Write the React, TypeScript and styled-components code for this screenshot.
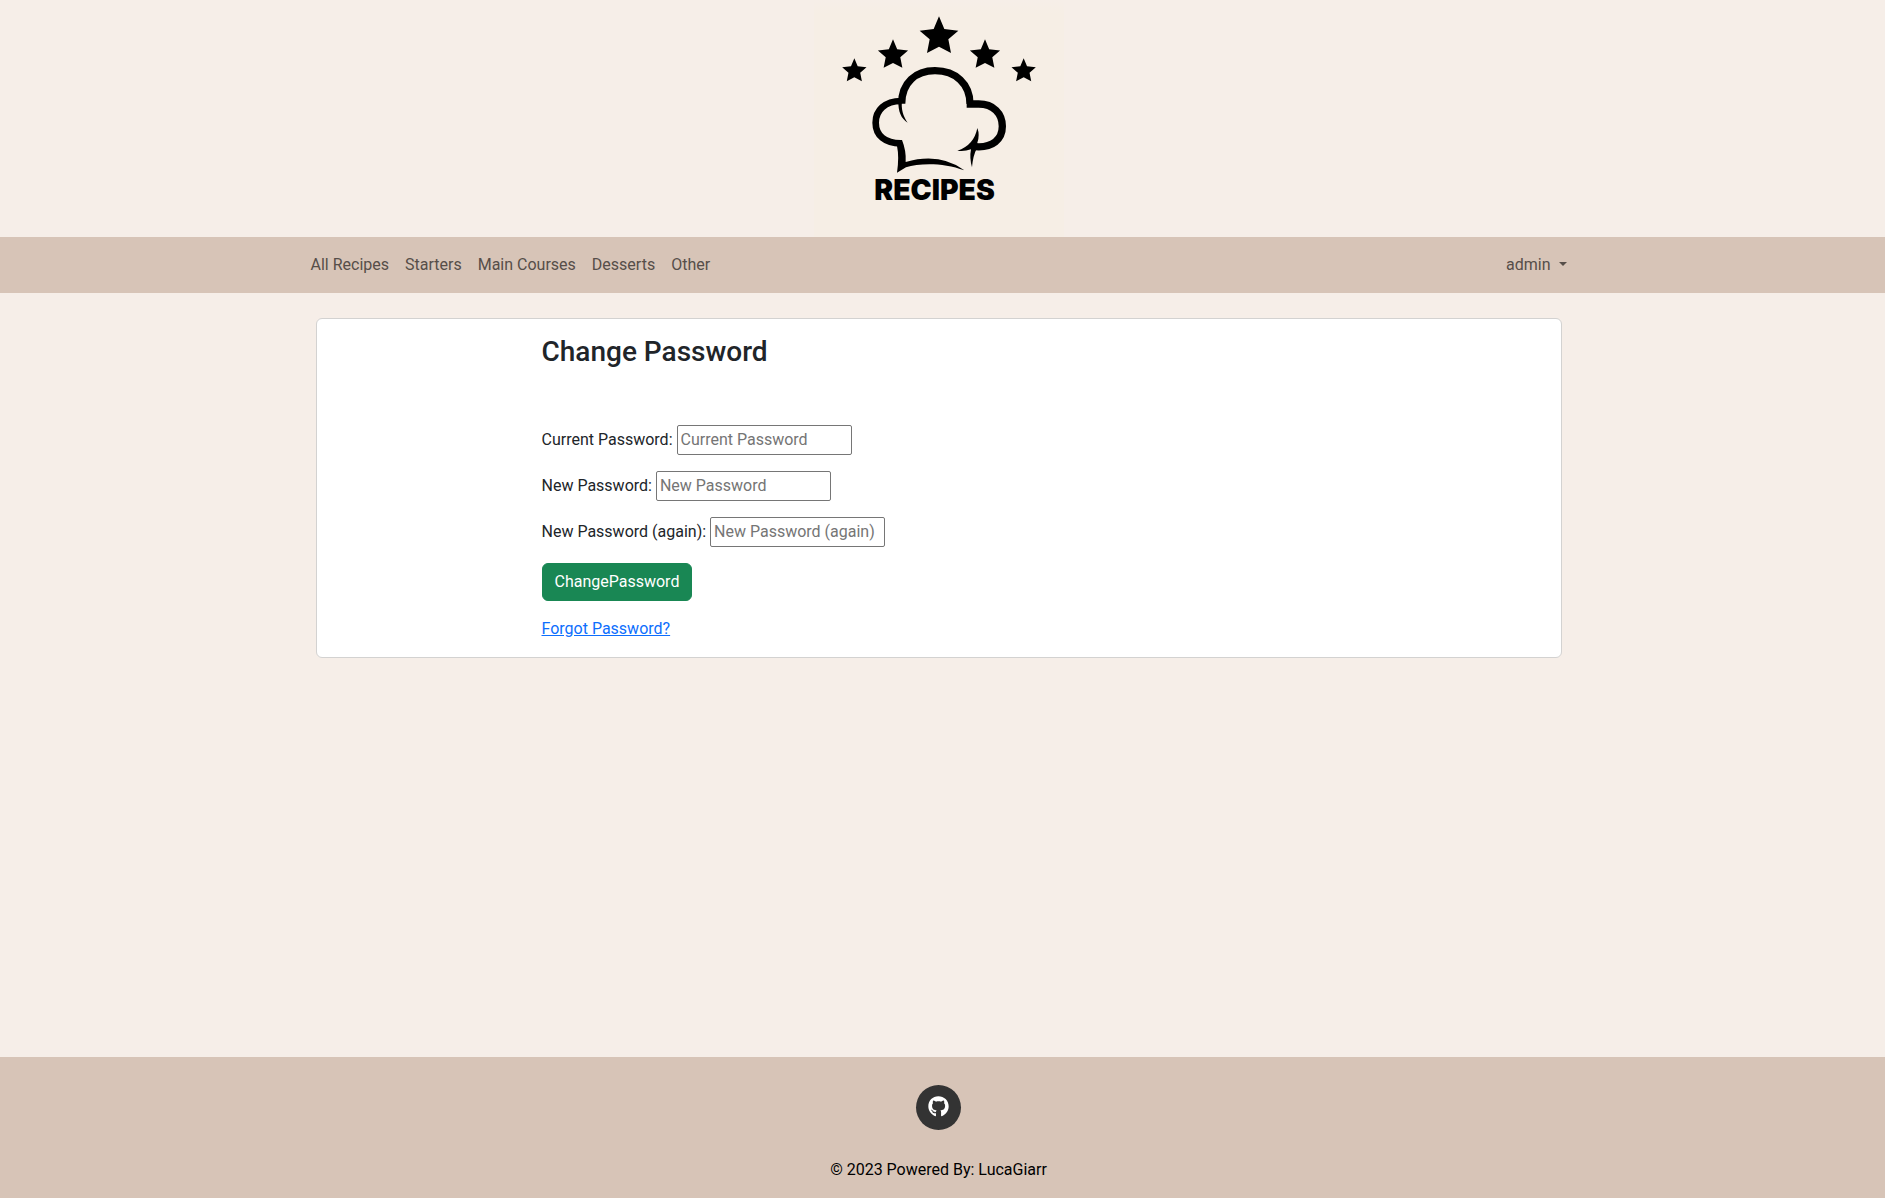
import React from "react";
import styled, { createGlobalStyle } from "styled-components";
import { FaGithub } from "react-icons/fa";

const GlobalStyle = createGlobalStyle`
  *, *::before, *::after { box-sizing: border-box; }
  body {
    margin: 0;
    background: #f6eee8;
    color: #212529;
    font-family: Roboto, "Liberation Sans", sans-serif;
    font-size: 16px;
    line-height: 24px;
  }
`;

const Page = styled.div`
  min-height: 100vh;
  display: flex;
  flex-direction: column;
`;

const Header = styled.header`
  display: flex;
  justify-content: center;
  padding-right: 8px;
`;

const Logo = styled.svg`
  display: block;
  width: 250px;
  height: 237px;
  background: linear-gradient(#f6eee8, #f6eee5 14px);
`;

const Wordmark = styled.text`
  font-family: Inter, "Liberation Sans", sans-serif;
  font-size: 85px;
  font-weight: 900;
`;

const NavBar = styled.nav`
  background: #d7c4b7;
  padding: 8px 8px 8px 0;
`;

const NavInner = styled.div`
  max-width: 1320px;
  margin: 0 auto;
  padding: 0 24px;
  display: flex;
  justify-content: space-between;
`;

const NavList = styled.ul`
  display: flex;
  margin: 0;
  padding: 0;
  list-style: none;
`;

const NavLink = styled.a`
  display: block;
  padding: 8px;
  color: #564e49;
  text-decoration: none;
`;

const UserMenu = styled.button`
  display: flex;
  align-items: center;
  gap: 8px;
  padding: 8px;
  border: 0;
  background: none;
  color: #564e49;
  font: inherit;
`;

const Caret = styled.span`
  margin-bottom: 2px;
  border-top: 4px solid currentColor;
  border-left: 4px solid transparent;
  border-right: 4px solid transparent;
`;

const Main = styled.main`
  flex: 1;
  padding: 25px 8px 25px 0;
`;

const Card = styled.section`
  max-width: 1246px;
  margin: 0 auto;
  padding: 16px;
  padding-left: min(18%, 225px);
  background: #fff;
  border: 1px solid #d3d2d1;
  border-radius: 6px;
`;

const Title = styled.h1`
  margin: 0 0 56px;
  font-size: 28px;
  font-weight: 500;
  line-height: 34px;
`;

const Form = styled.form`
  display: flex;
  flex-direction: column;
  align-items: flex-start;
  gap: 16px;
`;

const Field = styled.label`
  display: flex;
  align-items: center;
  gap: 4px;
`;

const Input = styled.input`
  width: 175px;
  height: 30px;
  padding: 0 3px 2px;
  border: 1px solid #767676;
  border-radius: 2px;
  background: #fff;
  color: inherit;
  font: inherit;
  &::placeholder { color: #757575; opacity: 1; }
`;

const SubmitButton = styled.button`
  padding: 6px 12px;
  border: 1px solid #198754;
  border-radius: 6px;
  background: #198754;
  color: #fff;
  font: inherit;
`;

const ForgotLink = styled.a`
  color: #0d6efd;
`;

const Footer = styled.footer`
  display: flex;
  flex-direction: column;
  align-items: center;
  gap: 28px;
  padding: 28px 8px 16px 0;
  background: #d7c4b7;
  color: #000;
`;

const SocialLink = styled.a`
  display: flex;
  align-items: center;
  justify-content: center;
  width: 45px;
  height: 45px;
  padding-bottom: 2px;
  border-radius: 50%;
  background: #333;
  color: #fff;
`;

const Credits = styled.p`
  margin: 0;
`;

const STAR =
  "M0 -58 L16 -20 L58 -15 L28 11 L36 52 L0 33 L-36 52 L-28 11 L-58 -15 L-16 -20 Z";

const stars = [
  { x: 163, y: 211, scale: 0.63 },
  { x: 279, y: 163, scale: 0.78 },
  { x: 417, y: 107, scale: 1 },
  { x: 555, y: 163, scale: 0.78 },
  { x: 671, y: 211, scale: 0.63 },
];

const RecipesLogo = () => (
  <Logo viewBox="42 0 750 711" role="img" aria-label="Recipes">
    {stars.map((s) => (
      <path key={s.x} d={STAR} transform={`translate(${s.x} ${s.y}) scale(${s.scale})`} />
    ))}
    <path
      fill="none"
      stroke="#000"
      strokeWidth="20"
      d="M304 303 C254 303 227 332 227 368 C227 406 255 430 302 430"
    />
    <path
      fill="none"
      stroke="#000"
      strokeWidth="22"
      d="M305 311 C305 248 347 212 405 212 C467 212 510 252 510 312 L500 312 L536 312 C580 312 607 340 607 379 C607 418 578 444 526 440"
    />
    <path d="M295 300 L306 300 C303 328 309 348 323 368 C304 356 294 336 295 300 Z" />
    <path d="M291 420 L306 420 Q319 452 317 486 Q420 457 493 511 C430 487 358 489 318 502 L291 518 Q298 470 291 438 Z" />
    <path d="M532 384 Q540 405 532 428 L530 446 Q519 466 516 502 Q508 474 513 448 Q493 455 472 452 Q522 436 532 384 Z" />
    <Wordmark x="223" y="599">RECIPES</Wordmark>
  </Logo>
);

const categories = ["All Recipes", "Starters", "Main Courses", "Desserts", "Other"];

const fields = [
  { name: "oldpassword", label: "Current Password" },
  { name: "password1", label: "New Password" },
  { name: "password2", label: "New Password (again)" },
];

export default function App() {
  return (
    <Page>
      <GlobalStyle />
      <Header>
        <RecipesLogo />
      </Header>
      <NavBar>
        <NavInner>
          <NavList>
            {categories.map((c) => (
              <li key={c}>
                <NavLink href="#">{c}</NavLink>
              </li>
            ))}
          </NavList>
          <UserMenu type="button">
            admin <Caret />
          </UserMenu>
        </NavInner>
      </NavBar>
      <Main>
        <Card>
          <Title>Change Password</Title>
          <Form onSubmit={(e) => e.preventDefault()}>
            {fields.map((f) => (
              <Field key={f.name}>
                {f.label}:
                <Input type="password" name={f.name} placeholder={f.label} />
              </Field>
            ))}
            <SubmitButton type="submit">ChangePassword</SubmitButton>
            <ForgotLink href="#">Forgot Password?</ForgotLink>
          </Form>
        </Card>
      </Main>
      <Footer>
        <SocialLink href="#" aria-label="GitHub">
          <FaGithub size={21} />
        </SocialLink>
        <Credits>© 2023 Powered By: LucaGiarr</Credits>
      </Footer>
    </Page>
  );
}
